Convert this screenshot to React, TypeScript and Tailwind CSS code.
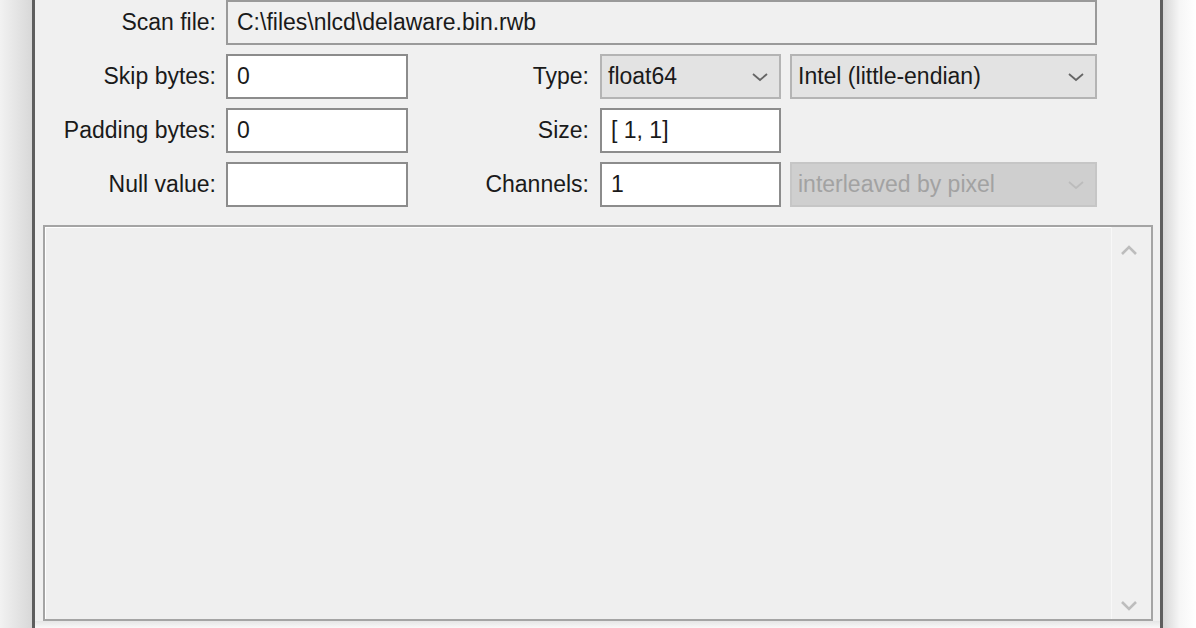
import React from "react";

const font = { fontFamily: '"Liberation Sans", Arial, sans-serif' };

function Chevron({ color = "#666" }: { color?: string }) {
  return (
    <svg width="18" height="12" viewBox="0 0 18 12" fill="none">
      <path d="M2 3 L9 9 L16 3" stroke={color} strokeWidth="1.8" />
    </svg>
  );
}

function Label({ text, w }: { text: string; w: string }) {
  return (
    <div className={`${w} shrink-0 text-right text-[#1a1a1a] leading-none`}>{text}</div>
  );
}

function Field({ value, w, readOnly }: { value: string; w: string; readOnly?: boolean }) {
  return (
    <div
      className={`${w} h-[45px] shrink-0 flex items-center px-[9px] border-2 ${
        readOnly ? "bg-[#f0f0f0] border-[#9a9a9a]" : "bg-white border-[#8c8c8c]"
      } text-[#1a1a1a]`}
    >
      {value}
    </div>
  );
}

function Select({ value, w, disabled }: { value: string; w: string; disabled?: boolean }) {
  return (
    <div
      className={`${w} h-[45px] shrink-0 flex items-center justify-between pl-[6px] pr-[10px] border-2 ${
        disabled
          ? "bg-[#cfcfcf] border-[#c6c6c6] text-[#a2a2a2]"
          : "bg-[#e3e3e3] border-[#b4b4b4] text-[#1a1a1a]"
      }`}
    >
      <span>{value}</span>
      <Chevron color={disabled ? "#bcbcbc" : "#666"} />
    </div>
  );
}

export default function App() {
  return (
    <div className="w-[1196px] h-[628px] overflow-hidden flex bg-white text-[23px]" style={font}>
      <div className="w-[32px] shrink-0 bg-gradient-to-r from-[#f2f2f2] to-[#d8d8d8]" />
      <div className="w-[1131px] shrink-0 border-x-[3px] border-[#5e5e5e] bg-[#f0f0f0] flex flex-col">
        <div className="flex flex-col gap-[9px]">
          <div className="flex items-center gap-[10px]">
            <Label text="Scan file:" w="w-[181px]" />
            <Field value="C:\files\nlcd\delaware.bin.rwb" w="w-[871px]" readOnly />
          </div>
          <div className="flex items-center">
            <Label text="Skip bytes:" w="w-[181px]" />
            <div className="w-[10px] shrink-0" />
            <Field value="0" w="w-[182px]" />
            <Label text="Type:" w="w-[181px]" />
            <div className="w-[11px] shrink-0" />
            <Select value="float64" w="w-[181px]" />
            <div className="w-[9px] shrink-0" />
            <Select value="Intel (little-endian)" w="w-[307px]" />
          </div>
          <div className="flex items-center">
            <Label text="Padding bytes:" w="w-[181px]" />
            <div className="w-[10px] shrink-0" />
            <Field value="0" w="w-[182px]" />
            <Label text="Size:" w="w-[181px]" />
            <div className="w-[11px] shrink-0" />
            <Field value="[ 1, 1]" w="w-[181px]" />
          </div>
          <div className="flex items-center">
            <Label text="Null value:" w="w-[181px]" />
            <div className="w-[10px] shrink-0" />
            <Field value="" w="w-[182px]" />
            <Label text="Channels:" w="w-[181px]" />
            <div className="w-[11px] shrink-0" />
            <Field value="1" w="w-[181px]" />
            <div className="w-[9px] shrink-0" />
            <Select value="interleaved by pixel" w="w-[307px]" disabled />
          </div>
        </div>
        <div className="mt-[18px] ml-[8px] w-[1110px] h-[396px] shrink-0 border-2 border-[#a4a4a4] bg-[#efefef] flex">
          <div className="flex-1 border-l border-t border-white" />
          <div className="w-[40px] shrink-0 border-l border-[#f8f8f8] bg-[#f0f0f0] flex flex-col items-center justify-between pt-[17px] pb-[7px] pr-[6px]">
            <svg width="20" height="12" viewBox="0 0 20 12" fill="none">
              <path d="M3 10 L10 3 L17 10" stroke="#bdbdbd" strokeWidth="2.6" />
            </svg>
            <svg width="20" height="12" viewBox="0 0 20 12" fill="none">
              <path d="M3 2 L10 9 L17 2" stroke="#bdbdbd" strokeWidth="2.6" />
            </svg>
          </div>
        </div>
        <div className="flex-1 bg-gradient-to-b from-[#e6e6e6] to-[#f8f8f8]" />
      </div>
      <div className="flex-1 bg-gradient-to-r from-[#d6d6d6] via-[#f6f6f6] to-white" />
    </div>
  );
}
